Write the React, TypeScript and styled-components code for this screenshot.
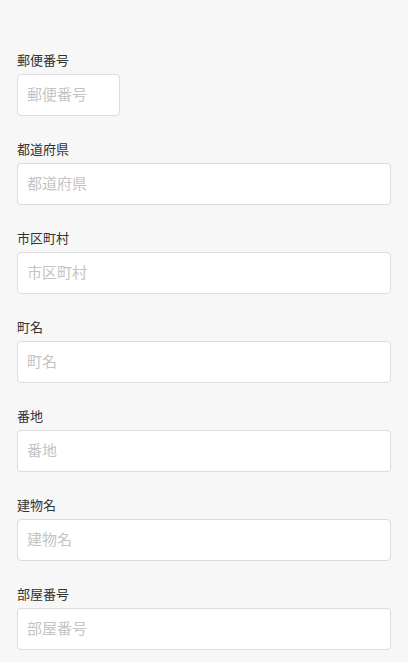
import React from "react";
import styled, { createGlobalStyle } from "styled-components";

const Global = createGlobalStyle`
  html, body { margin: 0; padding: 0; background: #f7f7f7; }
  body { font-family: "Noto Sans CJK JP", "Noto Sans", sans-serif; }
`;

const Form = styled.form`
  display: flex;
  flex-direction: column;
  gap: 24px;
  padding: 51px 17px 24px;
`;

const Field = styled.div`
  display: flex;
  flex-direction: column;
  gap: 5px;
`;

const Label = styled.label`
  font-size: 13px;
  line-height: 18px;
  color: #333;
`;

const Input = styled.input<{ $w?: number }>`
  box-sizing: border-box;
  width: ${(p) => (p.$w ? `${p.$w}px` : "100%")};
  height: 42px;
  padding: 0 9px 3px;
  border: 1px solid #dcdcdc;
  border-radius: 4px;
  background: #fff;
  font-family: inherit;
  font-size: 15px;
  color: #333;
  outline: none;
  &::placeholder { color: #c4c4c4; }
`;

const fields: { label: string; w?: number }[] = [
  { label: "郵便番号", w: 103 },
  { label: "都道府県" },
  { label: "市区町村" },
  { label: "町名" },
  { label: "番地" },
  { label: "建物名" },
  { label: "部屋番号" },
];

export default function App() {
  return (
    <>
      <Global />
      <Form>
        {fields.map((f) => (
          <Field key={f.label}>
            <Label>{f.label}</Label>
            <Input $w={f.w} placeholder={f.label} />
          </Field>
        ))}
      </Form>
    </>
  );
}
